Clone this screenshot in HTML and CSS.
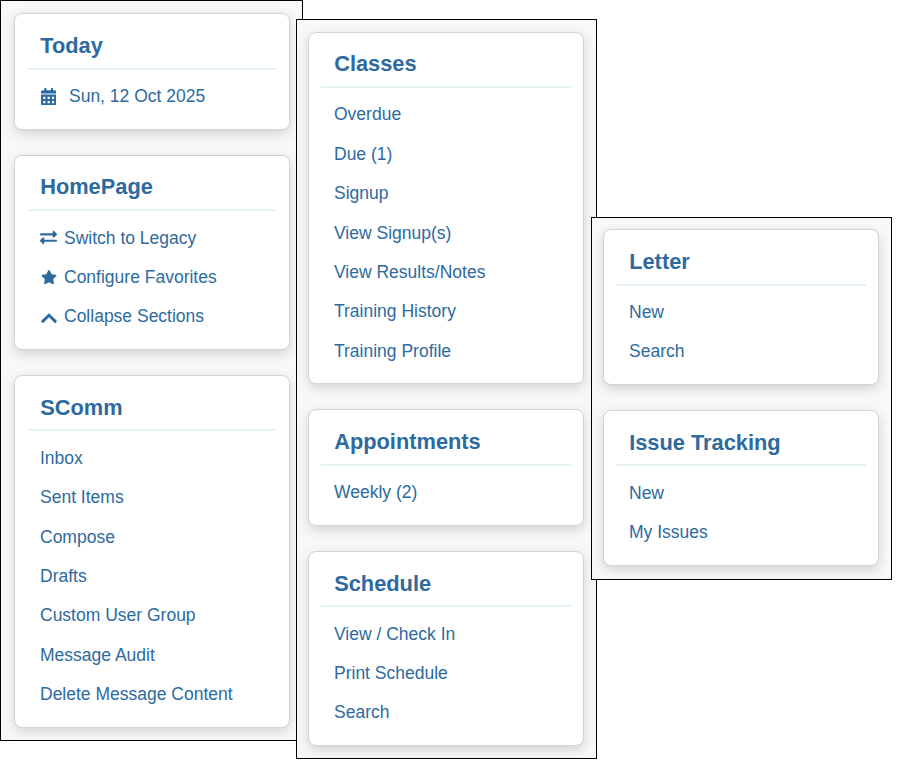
FILE: index.html
```html
<!DOCTYPE html>
<html lang="en">
<head>
    <meta charset="UTF-8">
    <title>Menu Sections</title>
    <link rel="stylesheet" href="styles.css">
</head>
<body>
    <div class="window window-left">
        <div class="card">
            <h2 class="card-title">Today</h2>
            <ul class="menu">
                <li class="with-icon">
                    <svg class="icon icon-cal" viewBox="0 0 448 512"><path d="M0 464c0 26.5 21.5 48 48 48h352c26.5 0 48-21.5 48-48V192H0v272zm320-196c0-6.6 5.4-12 12-12h40c6.6 0 12 5.4 12 12v40c0 6.6-5.4 12-12 12h-40c-6.6 0-12-5.4-12-12v-40zm0 128c0-6.6 5.4-12 12-12h40c6.6 0 12 5.4 12 12v40c0 6.6-5.4 12-12 12h-40c-6.6 0-12-5.4-12-12v-40zM192 268c0-6.6 5.4-12 12-12h40c6.6 0 12 5.4 12 12v40c0 6.6-5.4 12-12 12h-40c-6.6 0-12-5.4-12-12v-40zm0 128c0-6.6 5.4-12 12-12h40c6.6 0 12 5.4 12 12v40c0 6.6-5.4 12-12 12h-40c-6.6 0-12-5.4-12-12v-40zM64 268c0-6.6 5.4-12 12-12h40c6.6 0 12 5.4 12 12v40c0 6.6-5.4 12-12 12H76c-6.6 0-12-5.4-12-12v-40zm0 128c0-6.6 5.4-12 12-12h40c6.6 0 12 5.4 12 12v40c0 6.6-5.4 12-12 12H76c-6.6 0-12-5.4-12-12v-40zM400 64h-48V16c0-8.8-7.2-16-16-16h-32c-8.8 0-16 7.2-16 16v48H160V16c0-8.8-7.2-16-16-16h-32c-8.8 0-16 7.2-16 16v48H48C21.5 64 0 85.5 0 112v48h448v-48c0-26.5-21.5-48-48-48z"/></svg>
                    <span>Sun, 12 Oct 2025</span>
                </li>
            </ul>
        </div>
        <div class="card">
            <h2 class="card-title">HomePage</h2>
            <ul class="menu">
                <li class="with-icon">
                    <svg class="icon icon-swap" viewBox="0 0 512 512"><path d="M0 168v-16c0-13.255 10.745-24 24-24h360V80c0-21.367 25.899-32.042 40.971-16.971l80 80c9.372 9.373 9.372 24.569 0 33.941l-80 80C409.956 271.982 384 261.456 384 240v-48H24c-13.255 0-24-10.745-24-24zm488 152H128v-48c0-21.314-25.862-32.08-40.971-16.971l-80 80c-9.372 9.373-9.372 24.569 0 33.941l80 80C102.057 463.997 128 453.437 128 432v-48h360c13.255 0 24-10.745 24-24v-16c0-13.255-10.745-24-24-24z"/></svg>
                    <a href="#">Switch to Legacy</a>
                </li>
                <li class="with-icon">
                    <svg class="icon icon-star" viewBox="0 0 576 512"><path d="M259.3 17.8L194 150.2 47.9 171.5c-26.2 3.8-36.7 36.1-17.7 54.6l105.7 103-25 145.5c-4.5 26.3 23.2 46 46.4 33.7L288 439.6l130.7 68.7c23.2 12.2 50.9-7.4 46.4-33.7l-25-145.5 105.7-103c19-18.5 8.5-50.8-17.7-54.6L382 150.2 316.7 17.8c-11.7-23.6-45.6-23.9-57.4 0z"/></svg>
                    <a href="#">Configure Favorites</a>
                </li>
                <li class="with-icon">
                    <svg class="icon icon-chevron" viewBox="0 0 448 512"><path d="M240.971 130.524l194.343 194.343c9.373 9.373 9.373 24.569 0 33.941l-22.667 22.667c-9.357 9.357-24.522 9.375-33.901.04L224 227.495 69.255 381.516c-9.379 9.335-24.544 9.317-33.901-.04l-22.667-22.667c-9.373-9.373-9.373-24.569 0-33.941L207.03 130.525c9.372-9.373 24.568-9.373 33.941-.001z"/></svg>
                    <a href="#">Collapse Sections</a>
                </li>
            </ul>
        </div>
        <div class="card">
            <h2 class="card-title">SComm</h2>
            <ul class="menu">
                <li><a href="#">Inbox</a></li>
                <li><a href="#">Sent Items</a></li>
                <li><a href="#">Compose</a></li>
                <li><a href="#">Drafts</a></li>
                <li><a href="#">Custom User Group</a></li>
                <li><a href="#">Message Audit</a></li>
                <li><a href="#">Delete Message Content</a></li>
            </ul>
        </div>
    </div>

    <div class="window window-middle">
        <div class="card">
            <h2 class="card-title">Classes</h2>
            <ul class="menu">
                <li><a href="#">Overdue</a></li>
                <li><a href="#">Due (1)</a></li>
                <li><a href="#">Signup</a></li>
                <li><a href="#">View Signup(s)</a></li>
                <li><a href="#">View Results/Notes</a></li>
                <li><a href="#">Training History</a></li>
                <li><a href="#">Training Profile</a></li>
            </ul>
        </div>
        <div class="card">
            <h2 class="card-title">Appointments</h2>
            <ul class="menu">
                <li><a href="#">Weekly (2)</a></li>
            </ul>
        </div>
        <div class="card">
            <h2 class="card-title">Schedule</h2>
            <ul class="menu">
                <li><a href="#">View / Check In</a></li>
                <li><a href="#">Print Schedule</a></li>
                <li><a href="#">Search</a></li>
            </ul>
        </div>
    </div>

    <div class="window window-right">
        <div class="card">
            <h2 class="card-title">Letter</h2>
            <ul class="menu">
                <li><a href="#">New</a></li>
                <li><a href="#">Search</a></li>
            </ul>
        </div>
        <div class="card">
            <h2 class="card-title">Issue Tracking</h2>
            <ul class="menu">
                <li><a href="#">New</a></li>
                <li><a href="#">My Issues</a></li>
            </ul>
        </div>
    </div>
</body>
</html>
```

FILE: styles.css
```css
body {
    margin: 0;
    background: white;
    font-family: "Liberation Sans", Arial, sans-serif;
    color: #2d6a9f;
}

/* the three cropped screenshots pasted over each other */
.window {
    position: absolute;
    box-sizing: border-box;
    width: 301px;
    padding: 11.6px 11px 0 11px;
    background: #f6f8fa;
    border: 1px solid black;
    overflow: hidden;
}
.window-left {
    left: 0;
    top: 0;
    width: 303px;
    height: 741px;
    padding: 12.35px 11px 0 13px;
}
.window-middle {
    left: 296px;
    top: 19px;
    height: 740px;
}
.window-right {
    left: 591px;
    top: 217px;
    height: 363px;
    padding-top: 11.3px;
}

.card {
    box-sizing: border-box;
    width: 276px;
    margin-bottom: 25.05px;
    padding: 12px 12px 12.7px 12px;
    background: white;
    border: 1px solid #d4d4d4;
    border-radius: 8px;
    box-shadow: 0 4px 12px rgba(0,0,0,0.15);
}
.card-title {
    margin: 0 0 7px 0;
    padding: 3.7px 0 5.6px 13.2px;
    font-size: 21.8px;
    line-height: 32px;
    font-weight: bold;
    border-bottom: 2px solid #e6f3f5;
}

.menu {
    margin: 0;
    padding: 0 0 0 13px;
    list-style: none;
    font-size: 17.5px;
    line-height: 26.4px;
}
.menu li {
    padding: 6.5px 0;
}
.menu a {
    color: #2d6a9f;
    text-decoration: none;
}
.with-icon {
    display: flex;
    align-items: center;
}
.icon {
    fill: #2d6a9f;
    flex-shrink: 0;
}
.icon-cal {
    width: 15.3px;
    height: 17.5px;
    margin: 0 12.7px 0 1px;
}
.icon-swap {
    width: 17px;
    height: 17px;
    margin-right: 7px;
}
.icon-star {
    width: 16px;
    height: 14.2px;
    margin: 0 7px 0 1px;
}
.icon-chevron {
    width: 16px;
    height: 18.3px;
    margin: 3px 7.5px 0 0.5px;
}
```
